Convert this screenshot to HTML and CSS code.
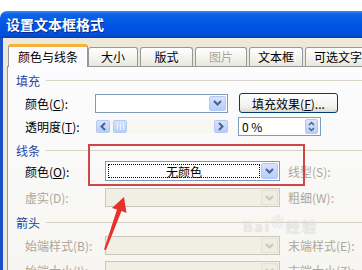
FILE: index.html
```html
<!DOCTYPE html>
<html lang="zh-CN">

<head>
    <meta charset="UTF-8">
    <meta name="viewport" content="width=device-width, initial-scale=1.0">
    <title>设置文本框格式</title>
    <link rel="stylesheet" href="styles.css">
</head>

<body>
    <div class="window">
        <!-- Title bar -->
        <div class="titlebar">设置文本框格式</div>

        <div class="frame">
            <!-- Tabs -->
            <div class="tabs">
                <div class="tab active">颜色与线条</div>
                <div class="tab w50">大小</div>
                <div class="tab w53">版式</div>
                <div class="tab w52 disabled">图片</div>
                <div class="tab w54">文本框</div>
                <div class="tab w64">可选文字</div>
            </div>

            <!-- Tab page -->
            <div class="panel">
                <div class="group-head h-fill">填充</div>

                <div class="row r-fill1">
                    <span class="label lw70">颜色(<u>C</u>):</span>
                    <div class="combo c-fill">
                        <span class="combo-text"></span>
                        <span class="drop"><svg width="9" height="6" viewBox="0 0 9 6"><path d="M1 1 L4.5 4.5 L8 1" fill="none" stroke="#4d6185" stroke-width="2"/></svg></span>
                    </div>
                    <button class="btn">填充效果(<u>F</u>)...</button>
                </div>

                <div class="row r-fill2">
                    <span class="label lw71">透明度(<u>T</u>):</span>
                    <div class="slider">
                        <span class="sbtn"><svg width="6" height="9" viewBox="0 0 6 9"><path d="M5 1 L1.5 4.5 L5 8" fill="none" stroke="#4d6185" stroke-width="2"/></svg></span>
                        <span class="thumb"><i></i><i></i><i></i></span>
                        <span class="track"></span>
                        <span class="sbtn"><svg width="6" height="9" viewBox="0 0 6 9"><path d="M1 1 L4.5 4.5 L1 8" fill="none" stroke="#4d6185" stroke-width="2"/></svg></span>
                    </div>
                    <div class="spin">
                        <span class="spin-text">0 %</span>
                        <span class="spin-btn"><svg width="7" height="11" viewBox="0 0 7 11"><path d="M1 4 L3.5 1.5 L6 4 M1 7 L3.5 9.5 L6 7" fill="none" stroke="#4d6185" stroke-width="1.5"/></svg></span>
                    </div>
                </div>

                <div class="group-head h-line">线条</div>

                <div class="row r-line1">
                    <span class="label lw80">颜色(<u>O</u>):</span>
                    <div class="combo c-line">
                        <span class="combo-text focus">无颜色</span>
                        <span class="drop"><svg width="9" height="6" viewBox="0 0 9 6"><path d="M1 1 L4.5 4.5 L8 1" fill="none" stroke="#4d6185" stroke-width="2"/></svg></span>
                    </div>
                    <span class="label side off">线型(S):</span>
                </div>

                <div class="row r-line2">
                    <span class="label lw80 off">虚实(D):</span>
                    <div class="combo c-line off">
                        <span class="combo-text"></span>
                        <span class="drop"><svg width="9" height="6" viewBox="0 0 9 6"><path d="M1 1 L4.5 4.5 L8 1" fill="none" stroke="#c9c7ba" stroke-width="2"/></svg></span>
                    </div>
                    <span class="label side off">粗细(W):</span>
                </div>

                <div class="group-head h-arrow">箭头</div>

                <div class="row r-arrow1">
                    <span class="label lw80 off">始端样式(B):</span>
                    <div class="combo c-line off">
                        <span class="combo-text"></span>
                        <span class="drop"><svg width="9" height="6" viewBox="0 0 9 6"><path d="M1 1 L4.5 4.5 L8 1" fill="none" stroke="#c9c7ba" stroke-width="2"/></svg></span>
                    </div>
                    <span class="label side off">末端样式(E):</span>
                </div>

                <div class="row r-arrow2">
                    <span class="label lw80 off">始端大小(I):</span>
                    <div class="combo c-line off">
                        <span class="combo-text"></span>
                        <span class="drop"><svg width="9" height="6" viewBox="0 0 9 6"><path d="M1 1 L4.5 4.5 L8 1" fill="none" stroke="#c9c7ba" stroke-width="2"/></svg></span>
                    </div>
                    <span class="label side off">末端大小(Z):</span>
                </div>
            </div>
        </div>
    </div>

    <!-- Annotations over the screenshot -->
    <div class="mark-box"></div>
    <svg class="mark-arrow" width="362" height="270" viewBox="0 0 362 270">
        <polygon points="124,197 126.5,213 121.5,211 106,250 104,249.5 117,209.5 112,208" fill="#e5322d"/>
    </svg>
    <div class="watermark">Bai<span class="paw">❀</span>经验</div>
</body>

</html>
```

FILE: styles.css
```css
body {
    margin: 0;
    width: 362px;
    height: 270px;
    overflow: hidden;
    position: relative;
    background-color: #ffffff;
    font-family: "Noto Sans CJK SC", "Liberation Sans", sans-serif;
    font-size: 12px;
    color: #000000;
}

.window {
    margin-top: 11px;
}

.titlebar {
    height: 27px;
    line-height: 27px;
    padding-left: 6px;
    border-radius: 7px 0 0 0;
    background: linear-gradient(#3a8cf6 0%, #0c63e4 12%, #0055e5 50%, #0050dc 85%, #0040c0 100%);
    color: #ffffff;
    font-size: 14px;
    font-weight: bold;
    text-shadow: 1px 1px 0 #0b2a8c;
}

.frame {
    border-left: 3px solid #1b4fc8;
    background-color: #ece9d8;
    padding: 7px 0 0 4px;
    height: 240px;
}

/* Tabs */
.tabs {
    display: flex;
    align-items: flex-end;
    height: 21px;
    padding-left: 1px;
    position: relative;
    z-index: 1;
}

.tab {
    height: 18px;
    line-height: 18px;
    text-align: center;
    border: 1px solid #919b9c;
    border-bottom: none;
    border-radius: 3px 3px 0 0;
    background: linear-gradient(#ffffff, #f3f2ec 60%, #e8e6dc);
    margin-right: 2px;
    flex-shrink: 0;
}

.tab.active {
    width: 78px;
    height: 19px;
    line-height: 20px;
    margin-right: 0;
    margin-bottom: -1px;
    padding-bottom: 1px;
    background: #fcfcfe;
    border-top: 3px solid #f6b03c;
}

.tab.disabled {
    color: #aca899;
}

.w50 { width: 48px; }
.w53 { width: 51px; }
.w52 { width: 50px; }
.w54 { width: 52px; }
.w64 { width: 64px; margin-right: 0; }

/* Tab page */
.panel {
    border: 1px solid #919b9c;
    border-right: none;
    background: linear-gradient(#fcfcfe, #f6f5f0);
    height: 220px;
    display: flex;
    flex-direction: column;
}

.group-head {
    display: flex;
    align-items: center;
    height: 16px;
    padding-left: 8px;
    color: #1f45a0;
}

.group-head::after {
    content: "";
    flex: 1;
    height: 1px;
    margin-left: 6px;
    background-color: #d6d3c4;
}

.h-fill { margin-top: 5px; }
.h-line { margin-top: 6px; }
.h-arrow { margin-top: 7px; }

.row {
    display: flex;
    align-items: center;
    padding-left: 17px;
    height: 19px;
}

.r-fill1 { margin-top: 5px; height: 20px; }
.r-fill2 { margin-top: 4px; }
.r-line1 { margin-top: 3px; height: 20px; }
.r-line2 { margin-top: 7px; }
.r-arrow1 { margin-top: 6px; }
.r-arrow2 { margin-top: 6px; }

.label {
    white-space: nowrap;
    flex-shrink: 0;
}

.label u {
    text-decoration: underline;
}

.lw70 { width: 70px; }
.lw71 { width: 71px; }
.lw80 { width: 80px; }

.label.side {
    margin-left: 8px;
}

.off {
    color: #aca899;
}

/* Combo boxes */
.combo {
    display: flex;
    box-sizing: border-box;
    height: 100%;
    border: 1px solid #7f9db9;
    background-color: #ffffff;
    padding: 1px;
    flex-shrink: 0;
}

.c-fill { width: 133px; height: 19px; }
.c-line { width: 175px; }

.combo-text {
    flex: 1;
    text-align: center;
    line-height: 14px;
}

.combo-text.focus {
    border: 1px dotted #000000;
    margin: 1px;
}

.drop {
    width: 15px;
    display: flex;
    align-items: center;
    justify-content: center;
    border: 1px solid #b4c8f4;
    border-radius: 2px;
    background: linear-gradient(#d7e3fd, #b7cdfb);
}

.combo.off {
    background-color: #f1efe3;
    border-color: #cac8bb;
}

.combo.off .drop {
    border-color: #e4e2d6;
    background: #efede2;
}

.btn {
    margin-left: 11px;
    width: 99px;
    height: 20px;
    padding: 0;
    border: 1px solid #003c74;
    border-radius: 3px;
    background: linear-gradient(#ffffff, #f2f1ec 70%, #dcd9cd);
    font-family: inherit;
    font-size: 12px;
    color: #000000;
    flex-shrink: 0;
}

/* Slider */
.slider {
    display: flex;
    align-items: center;
    width: 132px;
    height: 13px;
    background-color: #f7f6f1;
    flex-shrink: 0;
}

.sbtn,
.thumb {
    box-sizing: border-box;
    display: flex;
    align-items: center;
    justify-content: center;
    height: 13px;
    border: 1px solid #b4c8f4;
    border-radius: 2px;
    background: linear-gradient(#d7e3fd, #b7cdfb);
}

.sbtn {
    width: 14px;
}

.thumb {
    width: 14px;
    margin-left: 3px;
    gap: 2px;
}

.thumb i {
    width: 1px;
    height: 7px;
    background-color: #eef3fe;
}

.track {
    flex: 1;
}

/* Spin box */
.spin {
    display: flex;
    box-sizing: border-box;
    margin-left: 10px;
    width: 83px;
    height: 19px;
    border: 1px solid #7f9db9;
    background-color: #ffffff;
    padding: 1px;
    flex-shrink: 0;
}

.spin-text {
    flex: 1;
    padding-left: 2px;
    line-height: 15px;
}

.spin-btn {
    width: 11px;
    margin-right: 1px;
    display: flex;
    align-items: center;
    justify-content: center;
    border: 1px solid #b4c8f4;
    border-radius: 2px;
    background: linear-gradient(#d7e3fd, #b7cdfb);
}

/* Annotations */
.mark-box {
    position: absolute;
    left: 88px;
    top: 144px;
    width: 213px;
    height: 38px;
    border: 2px solid #d04545;
}

.mark-arrow {
    position: absolute;
    left: 0;
    top: 0;
}

.watermark {
    position: absolute;
    left: 243px;
    top: 218px;
    font-size: 14px;
    font-weight: bold;
    line-height: 16px;
    color: rgba(255, 255, 255, 0.5);
    text-shadow: 0 0 1px rgba(160, 160, 160, 0.5);
    letter-spacing: 2px;
}

.paw {
    font-size: 13px;
    position: relative;
    top: -6px;
}
```
